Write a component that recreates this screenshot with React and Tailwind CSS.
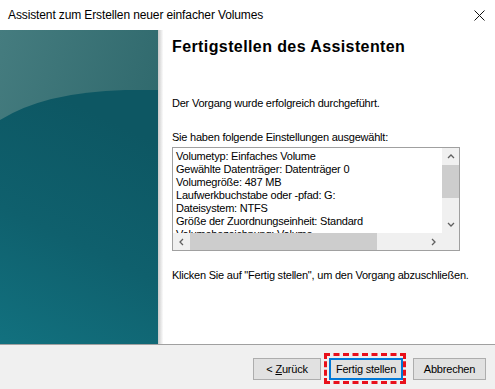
import React from "react";

const F = { fontFamily: '"Liberation Sans", Arial, sans-serif' };

function LeftArt() {
  return (
    <svg width="158" height="314" viewBox="0 0 158 314" className="block">
      <defs>
        <linearGradient id="top" x1="0" y1="0" x2="1" y2="0.6">
          <stop offset="0" stopColor="#457c7f" />
          <stop offset="1" stopColor="#2c666a" />
        </linearGradient>
        <linearGradient id="bot" x1="0.3" y1="0" x2="0" y2="1">
          <stop offset="0" stopColor="#0d5763" />
          <stop offset="0.5" stopColor="#0f606d" />
          <stop offset="1" stopColor="#12717f" />
        </linearGradient>
      </defs>
      <rect x="0" y="0" width="158" height="314" fill="url(#top)" />
      <path d="M0,90 Q45,62 125,60 L158,60 L158,314 L0,314 Z" fill="url(#bot)" />
    </svg>
  );
}

function Chevron({ dir }) {
  const paths = {
    up: "M1,5 L4,2 L7,5",
    down: "M1,2 L4,5 L7,2",
    left: "M5,1 L2,4 L5,7",
    right: "M2,1 L5,4 L2,7",
  };
  return (
    <svg width="8" height="8" viewBox="0 0 8 8" className="block">
      <path d={paths[dir]} fill="none" stroke="#606060" strokeWidth="1.3" />
    </svg>
  );
}

const lines = [
  "Volumetyp: Einfaches Volume",
  "Gewählte Datenträger: Datenträger 0",
  "Volumegröße: 487 MB",
  "Laufwerkbuchstabe oder -pfad: G:",
  "Dateisystem: NTFS",
  "Größe der Zuordnungseinheit: Standard",
  "Volumebezeichnung: Volume",
];

export default function App() {
  return (
    <div className="w-[495px] h-[389px] bg-white flex flex-col overflow-hidden text-black" style={F}>
      {/* title bar */}
      <div className="h-[30px] flex items-center justify-between pl-[8px] pr-[10px] shrink-0">
        <span className="text-[12px] tracking-[-0.12px]">Assistent zum Erstellen neuer einfacher Volumes</span>
        <svg width="11" height="11" viewBox="0 0 11 11">
          <path d="M0.5,0.5 L10.5,10.5 M10.5,0.5 L0.5,10.5" stroke="#111" strokeWidth="1" />
        </svg>
      </div>

      {/* main */}
      <div className="flex h-[314px] shrink-0">
        <LeftArt />
        <div className="w-[5px] bg-gradient-to-r from-[#c9c9c9] to-[#fbfbfb]" />
        <div className="flex-1 flex flex-col pl-[9px] pt-[7px] text-[11px] leading-[13px] tracking-[-0.22px]">
          <div className="text-[16px] font-bold leading-[20px] tracking-[0.4px]">Fertigstellen des Assistenten</div>
          <div className="mt-[40px]">Der Vorgang wurde erfolgreich durchgeführt.</div>
          <div className="mt-[21px]">Sie haben folgende Einstellungen ausgewählt:</div>
          <div className="mt-[3px] w-[288px] h-[104px] border border-[#a0a0a0] flex flex-col">
            <div className="flex flex-1 min-h-0">
              <div className="flex-1 overflow-hidden pl-[3px] pt-[2px] whitespace-nowrap">
                {lines.map((l) => (
                  <div key={l}>{l}</div>
                ))}
              </div>
              <div className="w-[17px] bg-[#f0f0f0] flex flex-col items-center">
                <div className="h-[17px] flex items-center justify-center"><Chevron dir="up" /></div>
                <div className="h-[33px] w-[17px] bg-[#cdcdcd]" />
                <div className="flex-1" />
                <div className="h-[17px] flex items-center justify-center"><Chevron dir="down" /></div>
              </div>
            </div>
            <div className="h-[17px] flex bg-[#f0f0f0]">
              <div className="w-[17px] flex items-center justify-center"><Chevron dir="left" /></div>
              <div className="w-[187px] h-[17px] bg-[#cdcdcd]" />
              <div className="flex-1" />
              <div className="w-[17px] flex items-center justify-center"><Chevron dir="right" /></div>
              <div className="w-[17px] bg-[#f0f0f0]" />
            </div>
          </div>
          <div className="mt-[18px]">
            Klicken Sie auf "Fertig stellen", um den Vorgang abzuschließen.
          </div>
        </div>
      </div>

      {/* footer */}
      <div className="flex-1 bg-[#f0f0f0] border-t border-[#a0a0a0] flex items-start justify-end pr-[9px] pt-[13px]">
        <div className="flex items-center text-[11px] tracking-[-0.2px]">
          <button className="w-[68px] h-[22px] bg-[#e1e1e1] border border-[#adadad] flex items-center justify-center">
            &lt; <span className="underline ml-[3px]">Z</span>urück
          </button>
          <div className="relative ml-[8px]">
            <button className="w-[74px] h-[22px] bg-[#e1e1e1] border-2 border-[#0078d7] flex items-center justify-center">
              Fertig stellen
            </button>
            <div className="absolute left-[-5px] top-[-5px] w-[82px] h-[31px] border-[3px] border-dashed border-[#e8101a] pointer-events-none" />
          </div>
          <button className="ml-[10px] w-[73px] h-[22px] bg-[#e1e1e1] border border-[#adadad] flex items-center justify-center">
            Abbrechen
          </button>
        </div>
      </div>
    </div>
  );
}
